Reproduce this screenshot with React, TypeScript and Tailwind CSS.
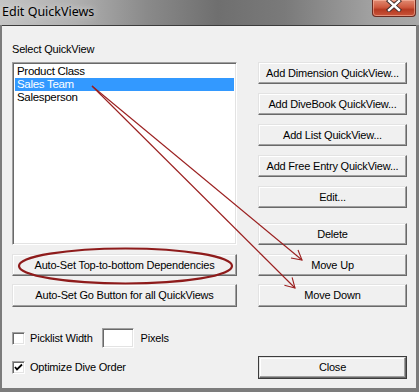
import React from 'react';

const btn =
  'flex items-center justify-center bg-[#f0f0f0] border border-t-[#e3e3e3] border-l-[#e3e3e3] border-b-[#696969] border-r-[#696969] shadow-[inset_-1px_-1px_0_#a0a0a0,inset_1px_1px_0_#ffffff] text-[11px] tracking-[-0.2px] text-black leading-none';

const sunken =
  'bg-white border border-t-[#a0a0a0] border-l-[#a0a0a0] border-b-white border-r-white shadow-[inset_1px_1px_0_#696969,inset_-1px_-1px_0_#e3e3e3]';

const Button = ({ label, className = '' }: { label: string; className?: string }) => (
  <div className={`${btn} ${className}`}>{label}</div>
);

const CheckBox = ({ checked }: { checked?: boolean }) => (
  <div className={`${sunken} w-[13px] h-[13px] flex items-center justify-center`}>
    {checked && (
      <svg width="9" height="9" viewBox="0 0 9 9">
        <path d="M1 4 L3 6.5 L8 1.5" stroke="#000" strokeWidth="1.8" fill="none" />
      </svg>
    )}
  </div>
);

const Annotations = () => (
  <svg className="absolute left-0 top-0 pointer-events-none" width="419" height="392" viewBox="0 0 419 392">
    <ellipse cx="125.5" cy="266" rx="106.5" ry="17.5" fill="none" stroke="#8e1b1b" strokeWidth="2.2" />
    <g stroke="#9b2020" strokeWidth="1.1" fill="none">
      <line x1="92" y1="86" x2="302" y2="260" />
      <line x1="92" y1="86" x2="295" y2="288" />
      <polyline points="291,258 302,260 298,250" />
      <polyline points="284.4,285.2 295,288 292.1,277.4" />
    </g>
  </svg>
);

const App: React.FC = () => {
  const items = ['Product Class', 'Sales Team', 'Salesperson'];

  return (
    <div
      className="relative w-[419px] h-[392px] overflow-hidden bg-[#7c7c7c] flex flex-col"
      style={{ fontFamily: '"Liberation Sans", Arial, sans-serif' }}
    >
      {/* title bar */}
      <div className="relative h-[25px] shrink-0 bg-[linear-gradient(90deg,#c4c4c4_0%,#b0b0b0_18%,#8a8a8a_35%,#6f6f6f_52%,#7a7a7a_68%,#a0a0a0_88%,#a8a8a8_100%)]">
        <div
          className="absolute left-[2px] top-[4px] text-[12.5px] leading-[16px] text-black [text-shadow:0_0_6px_#e8e8e8]"
          style={{ fontFamily: '"Noto Sans", "Open Sans", sans-serif' }}
        >
          Edit QuickViews
        </div>
        <div className="absolute left-[372px] top-0 w-[44px] h-[17px] rounded-b-[4px] border border-t-0 border-[#6b2a20] bg-[linear-gradient(180deg,#e08a72_0%,#cf5a3f_45%,#b53a22_60%,#c9543a_100%)] shadow-[inset_0_0_0_1px_rgba(255,200,180,0.5)] flex items-start justify-center">
          <svg width="16" height="12" viewBox="0 0 16 12" className="mt-[0px]">
            <path d="M3 1 L13 10 M13 1 L3 10" stroke="#3a2a2a" strokeWidth="4.2" strokeLinecap="square" />
            <path d="M3 1 L13 10 M13 1 L3 10" stroke="#ffffff" strokeWidth="2.4" strokeLinecap="square" />
          </svg>
        </div>
      </div>

      {/* body */}
      <div className="flex-1 flex flex-col pl-[2px] pr-[3px] pb-[4px]">
        <div className="flex-1 bg-[#f0f0f0] border-t border-[#3c3c3c] flex pl-[10px] pr-[9px]">
          {/* left column */}
          <div className="w-[225px] flex flex-col pt-[17px]">
            <div className="h-[13px] text-[11px] leading-[13px] tracking-[-0.2px] text-black">Select QuickView</div>
            <div className={`${sunken} mt-[6px] h-[183px] pt-[2px] px-[2px]`}>
              {items.map((it) => (
                <div
                  key={it}
                  className={`h-[13px] text-[11.5px] leading-[13px] tracking-[-0.3px] px-[2px] ${
                    it === 'Sales Team' ? 'bg-[#3399ff] text-white' : 'text-black'
                  }`}
                >
                  {it}
                </div>
              ))}
            </div>
            <Button label="Auto-Set Top-to-bottom Dependencies" className="mt-[9px] h-[22px]" />
            <Button label="Auto-Set Go Button for all QuickViews" className="mt-[8px] h-[23px]" />
            <div className="mt-[21px] h-[20px] flex items-center">
              <CheckBox />
              <span className="ml-[5px] text-[11px] tracking-[-0.2px] text-black">Picklist Width</span>
              <div className={`${sunken} ml-[9px] w-[32px] h-[20px]`} />
              <span className="ml-[7px] text-[11px] tracking-[-0.2px] text-black">Pixels</span>
            </div>
            <div className="mt-[13px] h-[13px] flex items-center">
              <CheckBox checked />
              <span className="ml-[5px] text-[11px] tracking-[-0.2px] text-black">Optimize Dive Order</span>
            </div>
          </div>

          {/* right column */}
          <div className="ml-[21px] w-[149px] flex flex-col pt-[36px]">
            <Button label="Add Dimension QuickView..." className="h-[22px]" />
            <Button label="Add DiveBook QuickView..." className="mt-[9px] h-[22px]" />
            <Button label="Add List QuickView..." className="mt-[9px] h-[22px]" />
            <Button label="Add Free Entry QuickView..." className="mt-[9px] h-[22px]" />
            <Button label="Edit..." className="mt-[9px] h-[22px]" />
            <Button label="Delete" className="mt-[15px] h-[22px]" />
            <Button label="Move Up" className="mt-[9px] h-[22px]" />
            <Button label="Move Down" className="mt-[8px] h-[23px]" />
            <div className="mt-[49px] h-[23px] border border-[#3c3c3c]">
              <Button label="Close" className="h-full" />
            </div>
          </div>
        </div>
      </div>

      <Annotations />
    </div>
  );
};

export default App;
